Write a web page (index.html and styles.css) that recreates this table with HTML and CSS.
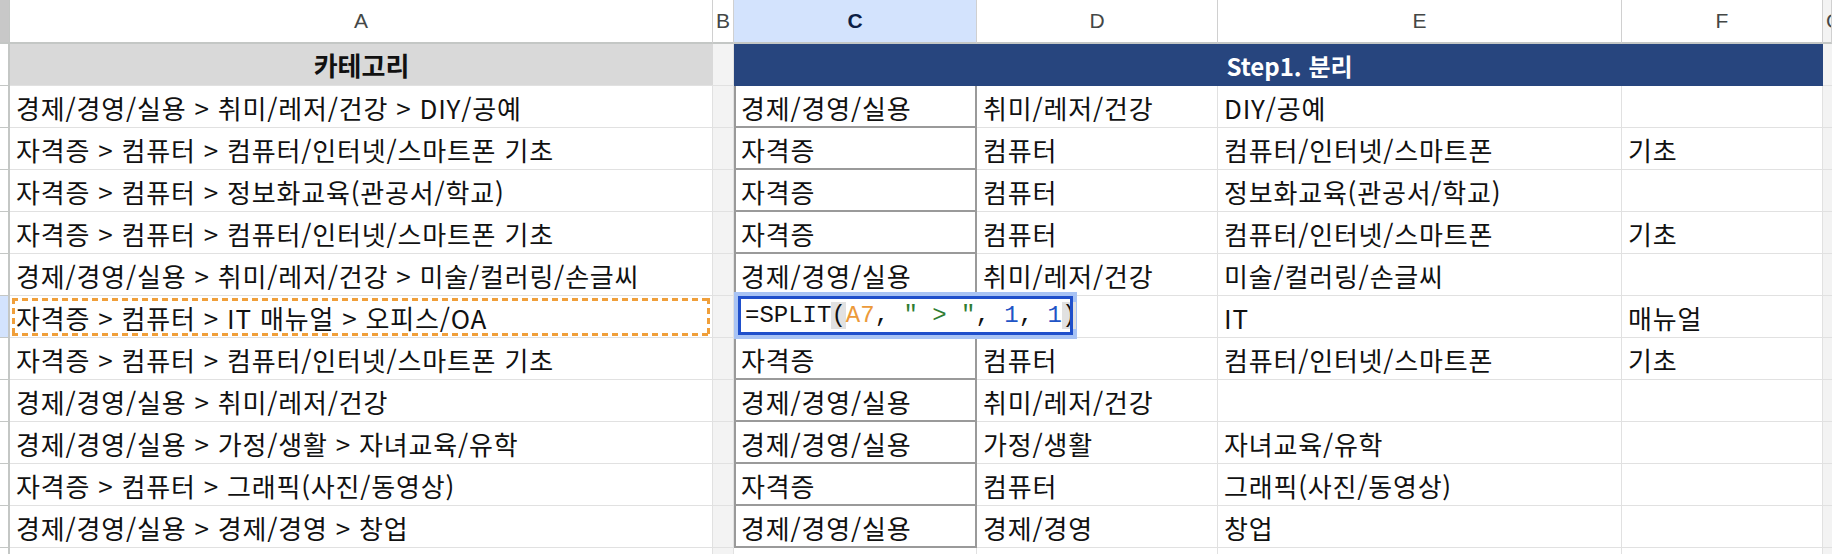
FILE: index.html
```html
<!DOCTYPE html>
<html lang="ko">
<head>
<meta charset="utf-8">
<title>Sheet</title>
<link rel="stylesheet" href="styles.css">
</head>
<body>
<div class="sheet">
  <div class="row colhead">
    <div class="cell corner"></div>
    <div class="cell ch">A</div>
    <div class="cell ch">B</div>
    <div class="cell ch active">C</div>
    <div class="cell ch">D</div>
    <div class="cell ch">E</div>
    <div class="cell ch">F</div>
    <div class="cell ch g">G</div>
  </div>

  <div class="row">
    <div class="cell rh"></div>
    <div class="cell title-a">카테고리</div>
    <div class="cell b"></div>
    <div class="cell title-c">Step1. 분리</div>
    <div class="cell g"></div>
  </div>

  <div class="row">
    <div class="cell rh"></div>
    <div class="cell">경제/경영/실용 &gt; 취미/레저/건강 &gt; DIY/공예</div>
    <div class="cell b"></div>
    <div class="cell c">경제/경영/실용</div>
    <div class="cell">취미/레저/건강</div>
    <div class="cell">DIY/공예</div>
    <div class="cell"></div>
    <div class="cell g"></div>
  </div>

  <div class="row">
    <div class="cell rh"></div>
    <div class="cell">자격증 &gt; 컴퓨터 &gt; 컴퓨터/인터넷/스마트폰 기초</div>
    <div class="cell b"></div>
    <div class="cell c">자격증</div>
    <div class="cell">컴퓨터</div>
    <div class="cell">컴퓨터/인터넷/스마트폰</div>
    <div class="cell">기초</div>
    <div class="cell g"></div>
  </div>

  <div class="row">
    <div class="cell rh"></div>
    <div class="cell">자격증 &gt; 컴퓨터 &gt; 정보화교육(관공서/학교)</div>
    <div class="cell b"></div>
    <div class="cell c">자격증</div>
    <div class="cell">컴퓨터</div>
    <div class="cell">정보화교육(관공서/학교)</div>
    <div class="cell"></div>
    <div class="cell g"></div>
  </div>

  <div class="row">
    <div class="cell rh"></div>
    <div class="cell">자격증 &gt; 컴퓨터 &gt; 컴퓨터/인터넷/스마트폰 기초</div>
    <div class="cell b"></div>
    <div class="cell c">자격증</div>
    <div class="cell">컴퓨터</div>
    <div class="cell">컴퓨터/인터넷/스마트폰</div>
    <div class="cell">기초</div>
    <div class="cell g"></div>
  </div>

  <div class="row">
    <div class="cell rh"></div>
    <div class="cell">경제/경영/실용 &gt; 취미/레저/건강 &gt; 미술/컬러링/손글씨</div>
    <div class="cell b"></div>
    <div class="cell c">경제/경영/실용</div>
    <div class="cell">취미/레저/건강</div>
    <div class="cell">미술/컬러링/손글씨</div>
    <div class="cell"></div>
    <div class="cell g"></div>
  </div>

  <div class="row">
    <div class="cell rh sel"></div>
    <div class="cell ref">자격증 &gt; 컴퓨터 &gt; IT 매뉴얼 &gt; 오피스/OA<span class="dash"></span></div>
    <div class="cell b"></div>
    <div class="cell c editing">
      <div class="editor"><span>=SPLIT</span><span class="paren">(</span><span class="r">A7</span><span>, </span><span class="s">" &gt; "</span><span>, </span><span class="n">1</span><span>, </span><span class="n">1</span><span class="paren">)</span><span class="caret"></span></div>
    </div>
    <div class="cell"></div>
    <div class="cell">IT</div>
    <div class="cell">매뉴얼</div>
    <div class="cell g"></div>
  </div>

  <div class="row">
    <div class="cell rh"></div>
    <div class="cell">자격증 &gt; 컴퓨터 &gt; 컴퓨터/인터넷/스마트폰 기초</div>
    <div class="cell b"></div>
    <div class="cell c">자격증</div>
    <div class="cell">컴퓨터</div>
    <div class="cell">컴퓨터/인터넷/스마트폰</div>
    <div class="cell">기초</div>
    <div class="cell g"></div>
  </div>

  <div class="row">
    <div class="cell rh"></div>
    <div class="cell">경제/경영/실용 &gt; 취미/레저/건강</div>
    <div class="cell b"></div>
    <div class="cell c">경제/경영/실용</div>
    <div class="cell">취미/레저/건강</div>
    <div class="cell"></div>
    <div class="cell"></div>
    <div class="cell g"></div>
  </div>

  <div class="row">
    <div class="cell rh"></div>
    <div class="cell">경제/경영/실용 &gt; 가정/생활 &gt; 자녀교육/유학</div>
    <div class="cell b"></div>
    <div class="cell c">경제/경영/실용</div>
    <div class="cell">가정/생활</div>
    <div class="cell">자녀교육/유학</div>
    <div class="cell"></div>
    <div class="cell g"></div>
  </div>

  <div class="row">
    <div class="cell rh"></div>
    <div class="cell">자격증 &gt; 컴퓨터 &gt; 그래픽(사진/동영상)</div>
    <div class="cell b"></div>
    <div class="cell c">자격증</div>
    <div class="cell">컴퓨터</div>
    <div class="cell">그래픽(사진/동영상)</div>
    <div class="cell"></div>
    <div class="cell g"></div>
  </div>

  <div class="row">
    <div class="cell rh"></div>
    <div class="cell">경제/경영/실용 &gt; 경제/경영 &gt; 창업</div>
    <div class="cell b"></div>
    <div class="cell c">경제/경영/실용</div>
    <div class="cell">경제/경영</div>
    <div class="cell">창업</div>
    <div class="cell"></div>
    <div class="cell g"></div>
  </div>

  <div class="row">
    <div class="cell rh"></div>
    <div class="cell"></div>
    <div class="cell b"></div>
    <div class="cell"></div>
    <div class="cell"></div>
    <div class="cell"></div>
    <div class="cell"></div>
    <div class="cell g"></div>
  </div>
</div>
</body>
</html>
```

FILE: styles.css
```css
html, body {
  margin: 0;
  padding: 0;
  background: #ffffff;
  overflow: hidden;
}

.sheet {
  width: 1832px;
  height: 554px;
  overflow: hidden;
  font-family: "Noto Sans CJK KR", "Noto Sans", sans-serif;
  font-size: 26px;
  letter-spacing: 0.8px;
  color: #111111;
}

.row {
  display: grid;
  grid-template-columns: 10px 703px 21px 243px 241px 404px 201px 9px;
  height: 42px;
}

.cell {
  box-sizing: border-box;
  border-right: 1px solid #e1e1e1;
  border-bottom: 1px solid #e1e1e1;
  display: flex;
  align-items: center;
  padding: 2px 0 0 6px;
  white-space: nowrap;
  overflow: visible;
  min-width: 0;
}

.colhead {
  height: 44px;
}

.colhead .cell {
  border-bottom: 2px solid #c4c7c5;
  border-right: 1px solid #d0d0d0;
  justify-content: center;
  padding: 0;
  font-family: "Liberation Sans", Arial, sans-serif;
  font-size: 21px;
  letter-spacing: 0;
  color: #444746;
}

.colhead .corner {
  background: #c8c8c8;
  border-right: 1px solid #c4c7c5;
}

.colhead .active {
  background: #d3e3fd;
  color: #0b1d45;
  font-weight: bold;
}

.colhead .g {
  justify-content: flex-start;
  padding-left: 3px;
  overflow: hidden;
}

.rh {
  padding: 0;
  background: #ffffff;
  border-right: 2px solid #c4c7c5;
  border-bottom: 1px solid #c4c7c5;
}

.rh.sel {
  background: #d3e3fd;
}

.b {
  padding: 0;
  background: #f3f3f3;
}

.g {
  padding: 0;
  background: #f3f3f3;
  border-right: none;
}

.title-a {
  background: #d9d9d9;
  justify-content: center;
  padding: 0;
  font-weight: bold;
  letter-spacing: 0;
  border-right: none;
  border-bottom: 1px solid #e1e1e1;
}

.title-c {
  grid-column: span 4;
  background: #27457e;
  color: #ffffff;
  font-weight: bold;
  font-size: 24px;
  letter-spacing: 0;
  justify-content: center;
  padding: 0 0 0 22px;
  border-right: none;
  border-bottom: none;
}

.c {
  border-left: 2px solid #9a9a9a;
  border-right: 2px solid #9a9a9a;
  border-bottom: 2px solid #9a9a9a;
  padding-left: 5px;
}

.ref {
  position: relative;
}

.dash {
  position: absolute;
  left: 2px;
  top: 2px;
  right: 2px;
  bottom: 1px;
  background:
    repeating-linear-gradient(90deg, #f09f3a 0 6px, transparent 6px 10px) top left / 100% 3px no-repeat,
    repeating-linear-gradient(90deg, #f09f3a 0 6px, transparent 6px 10px) bottom left / 100% 3px no-repeat,
    repeating-linear-gradient(180deg, #f09f3a 0 6px, transparent 6px 10px) top left / 3px 100% no-repeat,
    repeating-linear-gradient(180deg, #f09f3a 0 6px, transparent 6px 10px) top right / 3px 100% no-repeat;
}

.editing {
  position: relative;
}

.editor {
  position: absolute;
  left: -2px;
  top: -4px;
  width: 343px;
  height: 47px;
  box-sizing: border-box;
  border: 4px solid #a8c3f4;
  background: #ffffff;
  z-index: 2;
  display: flex;
  align-items: center;
  letter-spacing: 0;
}

.editor::before {
  content: "";
  position: absolute;
  inset: 0;
  border: 3px solid #1f4fcb;
  pointer-events: none;
}

.editor span {
  font-family: "Liberation Mono", "DejaVu Sans Mono", monospace;
  font-size: 24px;
  color: #111111;
  white-space: pre;
}

.editor span:first-child {
  margin-left: 7px;
}

.editor .paren {
  background: #e1e1e1;
}

.editor .r {
  color: #ec9a3a;
}

.editor .s {
  color: #2f7d32;
}

.editor .n {
  color: #1f55c6;
}

.editor .caret {
  width: 2px;
  height: 28px;
  background: #111111;
  margin-left: 1px;
}
```
